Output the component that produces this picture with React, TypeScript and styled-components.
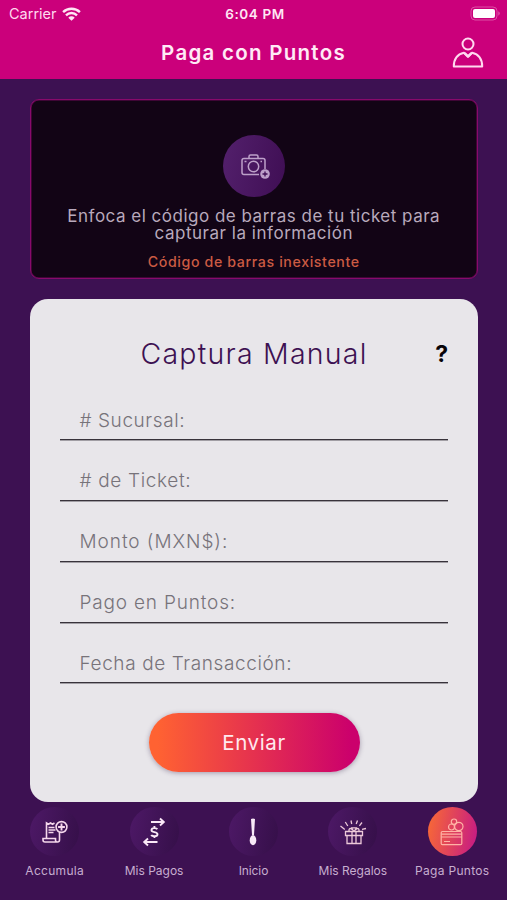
import React from "react";
import styled, { createGlobalStyle } from "styled-components";

const GlobalStyle = createGlobalStyle`
  * { box-sizing: border-box; }
  body { margin: 0; background: #3d1152; }
  button, input { font: inherit; border: 0; padding: 0; background: none; }
`;

const Screen = styled.div`
  width: 507px;
  height: 900px;
  overflow: hidden;
  display: flex;
  flex-direction: column;
  background: #3d1152;
  font-family: Inter, "Liberation Sans", sans-serif;
`;

const Header = styled.header`
  height: 79px;
  flex: none;
  background: #cb007b;
  color: #fff;
`;

const StatusBar = styled.div`
  height: 27px;
  display: grid;
  grid-template-columns: 1fr auto 1fr;
  align-items: center;
  padding: 0 6px 0 9px;
`;

const Carrier = styled.div`
  display: flex;
  align-items: center;
  gap: 5px;
  font-size: 14.5px;
  letter-spacing: 0;
  color: #ffd9ef;
`;

const Clock = styled.div`
  font-size: 13.5px;
  font-weight: 600;
  letter-spacing: 0.6px;
  color: #ffe6f4;
`;

const BatterySlot = styled.div`
  display: flex;
  justify-content: flex-end;
`;

const TitleBar = styled.div`
  height: 52px;
  display: grid;
  grid-template-columns: 1fr auto 1fr;
  align-items: center;
  padding: 0 23px;
`;

const Title = styled.h1`
  grid-column: 2;
  margin: 0;
  font-size: 20.5px;
  font-weight: 600;
  letter-spacing: 1.27px;
  line-height: 50px;
  color: #ffeaf6;
`;

const ProfileButton = styled.button`
  justify-self: end;
  display: flex;
  color: #ffd9ef;
`;

const Content = styled.main`
  display: flex;
  flex-direction: column;
  gap: 19.5px;
  padding: 19.5px 29.5px 0 30px;
`;

const Scanner = styled.section`
  height: 180.5px;
  border: 1px solid #880a6c;
  border-radius: 9px;
  background: #120415;
  box-shadow: inset 0 0 0 0.5px #6a0856;
  display: flex;
  flex-direction: column;
  align-items: center;
  padding-top: 35px;
`;

const ScanBadge = styled.div`
  width: 62px;
  height: 62px;
  flex: none;
  border-radius: 50%;
  background: linear-gradient(100deg, #53206c, #3f0e54);
  display: flex;
  align-items: center;
  justify-content: center;
  padding: 3px 0 0 4px;
`;

const ScanText = styled.p`
  margin: 11px 0 0;
  color: #b8a9bc;
  font-size: 17px;
  line-height: 17.5px;
  font-weight: 400;
  text-align: center;
`;

const ScanLine = styled.span<{ $spacing: number }>`
  display: block;
  letter-spacing: ${(p) => p.$spacing}px;
`;

const ScanError = styled.p`
  margin: 10px 0 0;
  color: #cb5b43;
  font-size: 14.2px;
  line-height: 17px;
  font-weight: 500;
  letter-spacing: 0.62px;
`;

const FormCard = styled.form`
  height: 503.5px;
  border-radius: 18px;
  background: #e8e6ea;
  padding: 35px 29.5px 0 30px;
  display: flex;
  flex-direction: column;
`;

const FormHead = styled.div`
  height: 40px;
  display: grid;
  grid-template-columns: 1fr auto 1fr;
  align-items: center;
`;

const FormTitle = styled.h2`
  grid-column: 2;
  margin: 0;
  color: #3d1152;
  font-size: 28.5px;
  font-weight: 300;
  letter-spacing: 1.23px;
`;

const Help = styled.button`
  justify-self: end;
  font-size: 23px;
  font-weight: 700;
  color: #080408;
`;

const Fields = styled.div`
  margin-top: 6px;
  display: flex;
  flex-direction: column;
`;

const Field = styled.label<{ $spacing: number }>`
  height: 60.75px;
  border-bottom: 1px solid #38333b;
  box-shadow: 0 1px 0 rgba(56, 51, 59, 0.4);
  padding: 29px 0 0 19.5px;
  color: #77737a;
  font-size: 19px;
  line-height: 24px;
  font-weight: 300;
  letter-spacing: ${(p) => p.$spacing}px;
`;

const Submit = styled.button`
  align-self: center;
  margin-top: 30px;
  width: 211px;
  height: 59px;
  border-radius: 30px;
  background: linear-gradient(90deg, #ff6232 4%, #cb006c 96%);
  box-shadow: 0 1px 5px rgba(60, 40, 80, 0.4);
  color: #ffe9ee;
  font-size: 20.5px;
  font-weight: 400;
  letter-spacing: 0.6px;
`;

const Nav = styled.nav`
  display: grid;
  grid-template-columns: repeat(5, 99.4px);
  padding: 5px 0 0 5px;
`;

const NavItem = styled.a`
  display: flex;
  flex-direction: column;
  align-items: center;
  gap: 6px;
`;

const NavBadge = styled.span<{ $active?: boolean }>`
  width: 49px;
  height: 49px;
  border-radius: 50%;
  display: flex;
  align-items: center;
  justify-content: center;
  background: ${(p) =>
    p.$active
      ? "linear-gradient(100deg, #f5653a 8%, #c91e80 92%)"
      : "linear-gradient(100deg, #4c1865 5%, #37104b 92%)"};
`;

const NavLabel = styled.span<{ $spacing: number }>`
  color: #c7aed0;
  font-size: 12px;
  line-height: 17px;
  font-weight: 400;
  letter-spacing: ${(p) => p.$spacing}px;
`;

const WifiIcon = () => (
  <svg width="19" height="14" viewBox="0 0 19 14" fill="none" stroke="#ffe6f4" strokeWidth="2.4">
    <path d="M1.1 5.200a12 12 0 0 1 16.800 0M4 8.300a7.900 7.900 0 0 1 11 0" />
    <path d="M9.500 13.800 6.300 10.700a4.300 4.300 0 0 1 6.400 0z" fill="#ffe6f4" stroke="none" />
  </svg>
);

const BatteryIcon = () => (
  <svg width="31" height="15" viewBox="0 0 31 15">
    <rect x="1" y="1" width="26" height="13" rx="4" fill="none" stroke="#de4fa6" />
    <rect x="3" y="3" width="22" height="9" rx="2" fill="#fff" />
    <path d="M28.500 5.300q2.200 2.200 0 4.400z" fill="#e778bb" />
  </svg>
);

const ProfileIcon = () => (
  <svg width="32" height="32" viewBox="0 0 32 32" fill="none" stroke="currentColor" strokeWidth="2" strokeLinejoin="round">
    <circle cx="16" cy="7" r="5.500" />
    <path d="M12 15.800C5.500 17.300 1.800 22 1.800 29.500h28.400c0-7.500-3.700-12.200-10.200-13.700L16 19.500z" />
    <path d="M12.500 16.200 16 19.500l3.500-3.300" strokeWidth="2.500" />
  </svg>
);

const CameraIcon = () => (
  <svg width="30" height="26" viewBox="0 0 30 26" fill="none" stroke="#bda0c9" strokeWidth="1.5">
    <path d="M8 4.500V2.500q0-1.500 1.500-1.500h6q1.500 0 1.500 1.500v2M18 20.500H3q-2 0-2-2V6.500q0-2 2-2h19q2 0 2 2V15" />
    <circle cx="12.500" cy="12.500" r="5.200" />
    <path d="M3.500 7.500h2M19.500 7.500h1.500" />
    <circle cx="24" cy="20" r="4.800" fill="#bda0c9" stroke="none" />
    <path d="M24 17.500v5M21.500 20h5" stroke="#3f0e54" strokeWidth="1.300" />
  </svg>
);

const ReceiptIcon = () => (
  <svg width="26" height="24" viewBox="0 0 26 24" fill="none" stroke="#f5d7ec" strokeWidth="1.600">
    <path d="M4.500 18.500V3l2 1.200L8.500 3l2 1.200L12.500 3M17.500 12v8q0 2-2 2M1 18.500h12.500V20q0 2 2 2H3q-2 0-2-2z" />
    <path d="M6.500 7.500h6M6.500 10h7M6.500 12.500h5" strokeWidth="1.400" />
    <circle cx="19.500" cy="7" r="5.400" />
    <path d="M19.500 3.600v6.800M16.100 7h6.800" strokeWidth="1.900" />
  </svg>
);

const TransferIcon = () => (
  <svg width="24" height="30" viewBox="0 0 24 30" fill="none" stroke="#fae8f7" strokeWidth="1.900">
    <path d="M9 5h12M18 1.500 21.800 5 18 8.500M15.500 25H2.500M6 21.500 2.200 25 6 28.500" />
    <path d="M15.300 12.200c-.7-1.300-5.800-1.800-5.800 1 0 2.600 6 1.200 6 4 0 2.900-5.400 2.400-6.300.8M12.400 9v2.200M12.400 19v2" />
  </svg>
);

const SpoonIcon = () => (
  <svg width="8" height="28" viewBox="0 0 8 28" fill="#f8e9f7">
    <path d="M2 1q2-1 4 0L5 17.500h-2z" />
    <ellipse cx="4" cy="22.300" rx="3.300" ry="5" />
  </svg>
);

const GiftIcon = () => (
  <svg width="28" height="26" viewBox="0 0 28 26" fill="none" stroke="#edc9d9" strokeWidth="1.300">
    <path d="M6.500 12.500h17v4h-17zM8 16.500v8h14v-8M13 12.500v12M17 12.500v12" />
    <path d="M15 12.500c-2.500-4.500-6-3.500-4.800 0M15 12.500c2.500-4.500 6-3.500 4.800 0M12 8.800h6" />
    <path d="M1.500 7l4.300 3.500M6.300 3l2.500 4M12 1.500l.7 3.500M18.500 1.500 17.200 5M23 3.500l-2.600 3.300M27 9.500l-4 .8" />
  </svg>
);

const CardIcon = () => (
  <svg width="24" height="28" viewBox="0 0 24 28" fill="none" stroke="#ffb2a5" strokeWidth="1.200">
    <rect x="1.200" y="13.500" width="20.600" height="13.200" rx="1.200" />
    <path d="M1.200 16.200h20.600M1.200 19h20.600M4 23.500h6" />
    <circle cx="14" cy="3.700" r="2.700" />
    <circle cx="11.500" cy="9" r="3" />
    <circle cx="18.800" cy="8.500" r="4.200" />
  </svg>
);

const fields = [
  { label: "# Sucursal:", spacing: 0.58 },
  { label: "# de Ticket:", spacing: 0.65 },
  { label: "Monto (MXN$):", spacing: 0.95 },
  { label: "Pago en Puntos:", spacing: 0.82 },
  { label: "Fecha de Transacción:", spacing: 0.6 },
];

const tabs = [
  { label: "Accumula", spacing: 0.3, icon: <ReceiptIcon /> },
  { label: "Mis Pagos", spacing: 0, icon: <TransferIcon /> },
  { label: "Inicio", spacing: -0.1, icon: <SpoonIcon /> },
  { label: "Mis Regalos", spacing: 0, icon: <GiftIcon /> },
  { label: "Paga Puntos", spacing: 0.3, icon: <CardIcon />, active: true },
];

export default function App() {
  return (
    <Screen>
      <GlobalStyle />
      <Header>
        <StatusBar>
          <Carrier>
            Carrier
            <WifiIcon />
          </Carrier>
          <Clock>6:04 PM</Clock>
          <BatterySlot>
            <BatteryIcon />
          </BatterySlot>
        </StatusBar>
        <TitleBar>
          <Title>Paga con Puntos</Title>
          <ProfileButton aria-label="Perfil">
            <ProfileIcon />
          </ProfileButton>
        </TitleBar>
      </Header>
      <Content>
        <Scanner>
          <ScanBadge>
            <CameraIcon />
          </ScanBadge>
          <ScanText>
            <ScanLine $spacing={0.5}>Enfoca el código de barras de tu ticket para</ScanLine>
            <ScanLine $spacing={0.53}>capturar la información</ScanLine>
          </ScanText>
          <ScanError>Código de barras inexistente</ScanError>
        </Scanner>
        <FormCard>
          <FormHead>
            <FormTitle>Captura Manual</FormTitle>
            <Help type="button">?</Help>
          </FormHead>
          <Fields>
            {fields.map((f) => (
              <Field key={f.label} $spacing={f.spacing}>
                {f.label}
              </Field>
            ))}
          </Fields>
          <Submit type="button">Enviar</Submit>
        </FormCard>
      </Content>
      <Nav>
        {tabs.map((t) => (
          <NavItem key={t.label}>
            <NavBadge $active={t.active}>{t.icon}</NavBadge>
            <NavLabel $spacing={t.spacing}>{t.label}</NavLabel>
          </NavItem>
        ))}
      </Nav>
    </Screen>
  );
}
